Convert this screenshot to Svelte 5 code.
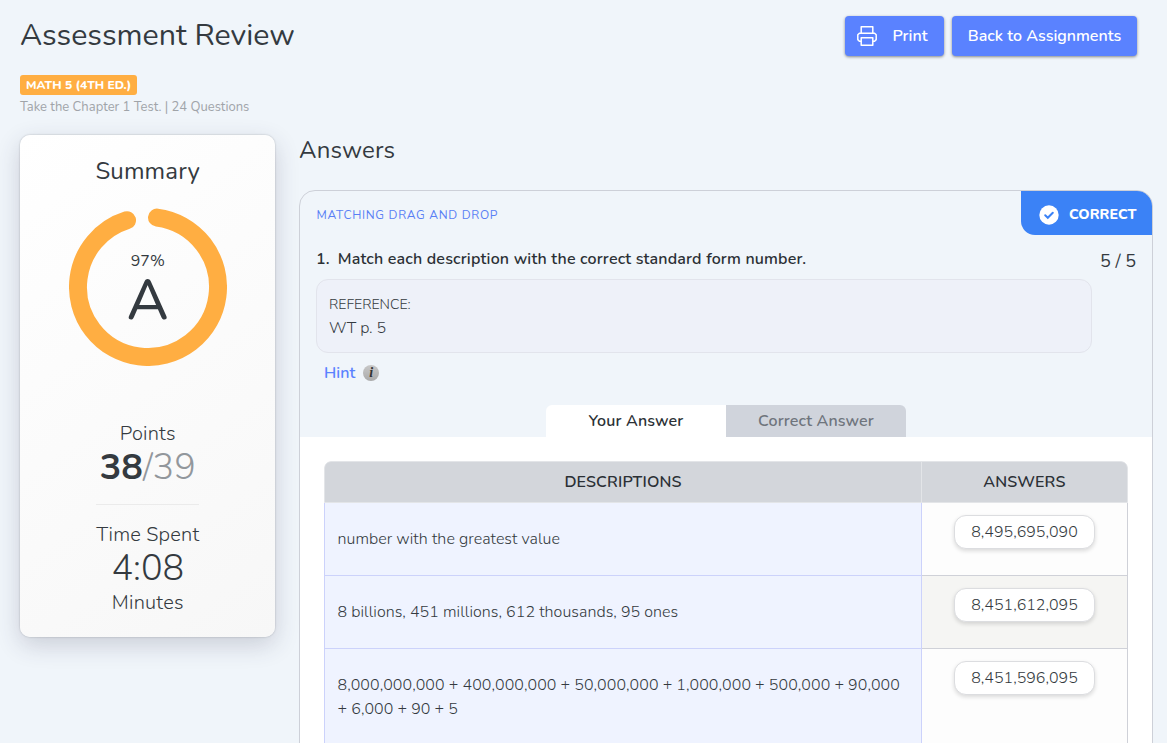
<script lang="ts">
	const earned = 38;
	const possible = 39;
	const radius = 70;
	const circumference = 2 * Math.PI * radius;
	const arc = (circumference * 334.6) / 360;

	const rows = [
		{ description: 'number with the greatest value', answer: '8,495,695,090' },
		{ description: '8 billions, 451 millions, 612 thousands, 95 ones', answer: '8,451,612,095' },
		{
			description:
				'8,000,000,000 + 400,000,000 + 50,000,000 + 1,000,000 + 500,000 + 90,000 + 6,000 + 90 + 5',
			answer: '8,451,596,095'
		}
	];

	let tab = $state('yours');
</script>

<div class="page">
	<header class="top">
		<div>
			<h1>Assessment Review</h1>
			<div class="course">MATH 5 (4TH ED.)</div>
			<p class="subtitle">Take the Chapter 1 Test. | 24 Questions</p>
		</div>
		<div class="actions">
			<button class="btn print">
				<svg width="20" height="20" viewBox="0 0 20 20" fill="none" stroke="#fff" stroke-width="1.5" stroke-linejoin="round">
					<path d="M4.2 7.2V.8h11.6v6.4M4.2 15.2H2.4L.8 13.6V8.8l1.6-1.6h15.2l1.6 1.6v4.8l-1.6 1.6h-1.8" />
					<path d="M4.2 11.8h11.6v7.4H4.2z" />
				</svg>
				<span>Print</span>
			</button>
			<button class="btn back">Back to Assignments</button>
		</div>
	</header>

	<div class="columns">
		<aside class="summary">
			<h2>Summary</h2>
			<div class="ring">
				<svg width="158" height="158" viewBox="0 0 158 158">
					<circle
						cx="79"
						cy="79"
						r={radius}
						fill="none"
						stroke="#ffae42"
						stroke-width="18"
						stroke-linecap="round"
						stroke-dasharray="{arc} {circumference}"
						transform="rotate(-82.6 79 79)"
					/>
				</svg>
				<div class="grade">
					<span class="percent">97%</span>
					<span class="letter">A</span>
				</div>
			</div>
			<div class="label">Points</div>
			<div class="figure"><b>{earned}</b><span class="total">/{possible}</span></div>
			<hr />
			<div class="label">Time Spent</div>
			<div class="figure">4:08</div>
			<div class="label">Minutes</div>
		</aside>

		<main>
			<h2 class="answers-title">Answers</h2>
			<section class="question">
				<div class="question-head">
					<span class="type">MATCHING DRAG AND DROP</span>
					<div class="status">
						<svg width="20" height="20" viewBox="0 0 20 20">
							<circle cx="10" cy="10" r="9.7" fill="#fff" />
							<path d="M6.2 10.3l2.6 2.5 5-5" fill="none" stroke="#3b82f6" stroke-width="2" stroke-linecap="round" />
						</svg>
						<span>CORRECT</span>
					</div>
				</div>
				<div class="question-body">
					<div class="prompt-col">
						<div class="prompt">
							<span>1.</span>
							<span>Match each description with the correct standard form number.</span>
						</div>
						<div class="reference">
							<div class="ref-label">REFERENCE:</div>
							<div>WT p. 5</div>
						</div>
						<div class="hint">
							<span>Hint</span>
							<i class="info">i</i>
						</div>
					</div>
					<div class="score">5 / 5</div>
				</div>
				<div class="tabs">
					<button class:active={tab === 'yours'} onclick={() => (tab = 'yours')}>Your Answer</button>
					<button class:active={tab === 'correct'} onclick={() => (tab = 'correct')}>Correct Answer</button>
				</div>
				<div class="response">
					<div class="table">
						<div class="row table-head">
							<div>DESCRIPTIONS</div>
							<div>ANSWERS</div>
						</div>
						{#each rows as row}
							<div class="row">
								<div class="description">{row.description}</div>
								<div class="answer"><span class="chip">{row.answer}</span></div>
							</div>
						{/each}
					</div>
				</div>
			</section>
		</main>
	</div>
</div>

<style>
	:global(body) {
		background: #f0f5fa;
		overflow: hidden;
	}

	.page {
		box-sizing: border-box;
		width: 1167px;
		height: 743px;
		overflow: hidden;
		padding: 16px 14px 0 20px;
		font-family: Nunito, Lato, 'Open Sans', sans-serif;
		font-size: 16px;
		font-weight: 350;
		color: #343a40;
	}

	h1,
	h2,
	p {
		margin: 0;
		font-weight: 400;
	}

	button {
		font: inherit;
		border: none;
		padding: 0;
		cursor: pointer;
	}

	.top {
		display: flex;
		justify-content: space-between;
		height: 119px;
	}

	h1 {
		font-size: 30.4px;
		line-height: 38px;
	}

	.course {
		display: inline-block;
		margin-top: 21px;
		padding: 0 6px;
		border-radius: 3px;
		background: #ffae42;
		color: #fff;
		font-size: 12px;
		font-weight: 800;
		line-height: 20px;
	}

	.subtitle {
		margin-top: 3px;
		font-size: 13px;
		line-height: 18px;
		color: #a0a4a9;
	}

	.actions {
		display: flex;
		align-items: flex-start;
		gap: 8px;
		margin-right: 16px;
	}

	.btn {
		display: flex;
		align-items: center;
		justify-content: center;
		height: 40px;
		border-radius: 4px;
		background: #5a82ff;
		color: #fff;
		font-weight: 600;
		box-shadow: 0 1px 3px rgba(0, 0, 0, 0.45);
	}

	.print {
		box-sizing: border-box;
		width: 99px;
		padding-right: 4px;
		gap: 15px;
	}

	.back {
		width: 185px;
	}

	.columns {
		display: flex;
		gap: 24px;
	}

	.summary {
		box-sizing: border-box;
		width: 255.5px;
		height: 502px;
		margin-right: 0.5px;
		padding: 21px 0 0 1px;
		border-radius: 10px;
		background: linear-gradient(145deg, #fff, #f7f7f7);
		box-shadow:
			0 0 2px rgba(0, 0, 0, 0.25),
			0 8px 24px rgba(50, 50, 80, 0.2);
		text-align: center;
	}

	h2 {
		font-size: 24px;
		line-height: 30px;
		letter-spacing: 0.15px;
	}

	.ring {
		position: relative;
		width: 158px;
		height: 158px;
		margin: 22px auto 54px;
	}

	.ring svg {
		display: block;
	}

	.grade {
		position: absolute;
		inset: 0;
		display: flex;
		flex-direction: column;
		align-items: center;
		padding-top: 42px;
	}

	.percent {
		line-height: 22px;
		font-weight: 400;
	}

	.letter {
		font-size: 57px;
		font-weight: 500;
		line-height: 56px;
	}

	.label {
		font-size: 20px;
		font-weight: 300;
		line-height: 27px;
		letter-spacing: 0.2px;
	}

	.figure {
		height: 41px;
		font-size: 36px;
		font-weight: 300;
		line-height: 42px;
	}

	.figure b {
		font-weight: 700;
	}

	.total {
		color: #92979c;
	}

	hr {
		width: 103px;
		height: 1px;
		margin: 16px auto;
		border: none;
		background: #ebebeb;
	}

	main {
		flex: 1;
	}

	.answers-title {
		margin: 0 0 25px;
	}

	.question {
		box-sizing: border-box;
		width: 854px;
		height: 700px;
		border: 1px solid #cdd0d8;
		border-radius: 16px 16px 0 0;
		overflow: hidden;
	}

	.question-head {
		display: flex;
		justify-content: space-between;
		height: 44px;
		padding-left: 16.5px;
	}

	.type {
		padding-top: 14px;
		font-size: 12px;
		font-weight: 400;
		line-height: 20px;
		letter-spacing: 0.7px;
		color: #5a7ff5;
	}

	.status {
		box-sizing: border-box;
		display: flex;
		align-items: center;
		gap: 10px;
		width: 131px;
		padding: 3px 0 0 18px;
		border-radius: 0 0 0 14px;
		background: #3b82f6;
		color: #fff;
		font-size: 14.2px;
		font-weight: 800;
		line-height: 19px;
	}

	.question-body {
		display: flex;
		padding: 12px 16px 0 16px;
		height: 158px;
	}

	.prompt-col {
		width: 776px;
	}

	.prompt {
		display: flex;
		gap: 8px;
		line-height: 24px;
		font-weight: 600;
		letter-spacing: 0.17px;
		color: #2b3035;
	}

	.reference {
		box-sizing: border-box;
		height: 74px;
		margin-top: 8px;
		padding: 12px;
		border: 1px solid #e2e4ec;
		border-radius: 12px;
		background: #eef1f9;
		line-height: 24px;
	}

	.ref-label {
		height: 24px;
		font-size: 14.1px;
		line-height: 26px;
	}

	.hint {
		display: flex;
		align-items: center;
		gap: 8px;
		height: 24px;
		margin-top: 8px;
		padding-left: 8px;
		color: #5a82ff;
		font-weight: 600;
	}

	.info {
		width: 16px;
		height: 16px;
		border-radius: 50%;
		background: linear-gradient(#c8c8c8, #aaa);
		color: #333;
		font: italic bold 14px/16px 'Liberation Serif', serif;
		text-align: center;
	}

	.score {
		flex: 1;
		padding-top: 2px;
		font-size: 18px;
		font-weight: 400;
		line-height: 24px;
		text-align: right;
	}

	.tabs {
		display: flex;
		justify-content: center;
		height: 32px;
	}

	.tabs button {
		width: 180px;
		background: #d0d4dc;
		color: #6f757d;
		font-weight: 600;
		letter-spacing: 0.15px;
	}

	.tabs button:first-child {
		border-radius: 6px 0 0 0;
	}

	.tabs button:last-child {
		border-radius: 0 6px 0 0;
	}

	.tabs .active {
		background: #fff;
		color: #2b3035;
	}

	.response {
		height: 400px;
		padding: 24px;
		background: #fff;
	}

	.table {
		border-radius: 7px 7px 0 0;
		overflow: hidden;
	}

	.row {
		display: grid;
		grid-template-columns: 598px 1fr;
	}

	.table-head {
		height: 42px;
		box-sizing: border-box;
		border: 1px solid #e3e5e8;
		border-radius: 7px 7px 0 0;
		grid-template-columns: 597px 1fr;
		background: #d3d6db;
		text-align: center;
		font-weight: 600;
		line-height: 40px;
		letter-spacing: 0.15px;
		color: #2b3035;
	}

	.table-head div:first-child {
		border-right: 1px solid #e3e5e8;
	}

	.description,
	.answer {
		box-sizing: border-box;
		min-height: 73px;
		padding: 24px 13px;
		line-height: 24px;
	}

	.description {
		padding-left: 12.5px;
		border: 1px solid #ccd2fb;
		border-top: none;
		background: #eff3ff;
		letter-spacing: 0.05px;
	}

	.answer {
		padding: 12px 0;
		border: 1px solid #cfd1d8;
		border-width: 0 1px 1px 0;
		background: #fdfdfd;
		text-align: center;
	}

	.row:nth-child(odd) .answer {
		background: #f5f5f3;
	}

	.row:last-child .answer {
		background: #fdfdfd;
	}

	.chip {
		box-sizing: border-box;
		display: inline-block;
		width: 141px;
		height: 34px;
		border: 1px solid #dcdde0;
		border-radius: 12px;
		background: #fff;
		line-height: 33px;
		box-shadow: 0 2px 4px rgba(0, 0, 0, 0.14);
	}
</style>
